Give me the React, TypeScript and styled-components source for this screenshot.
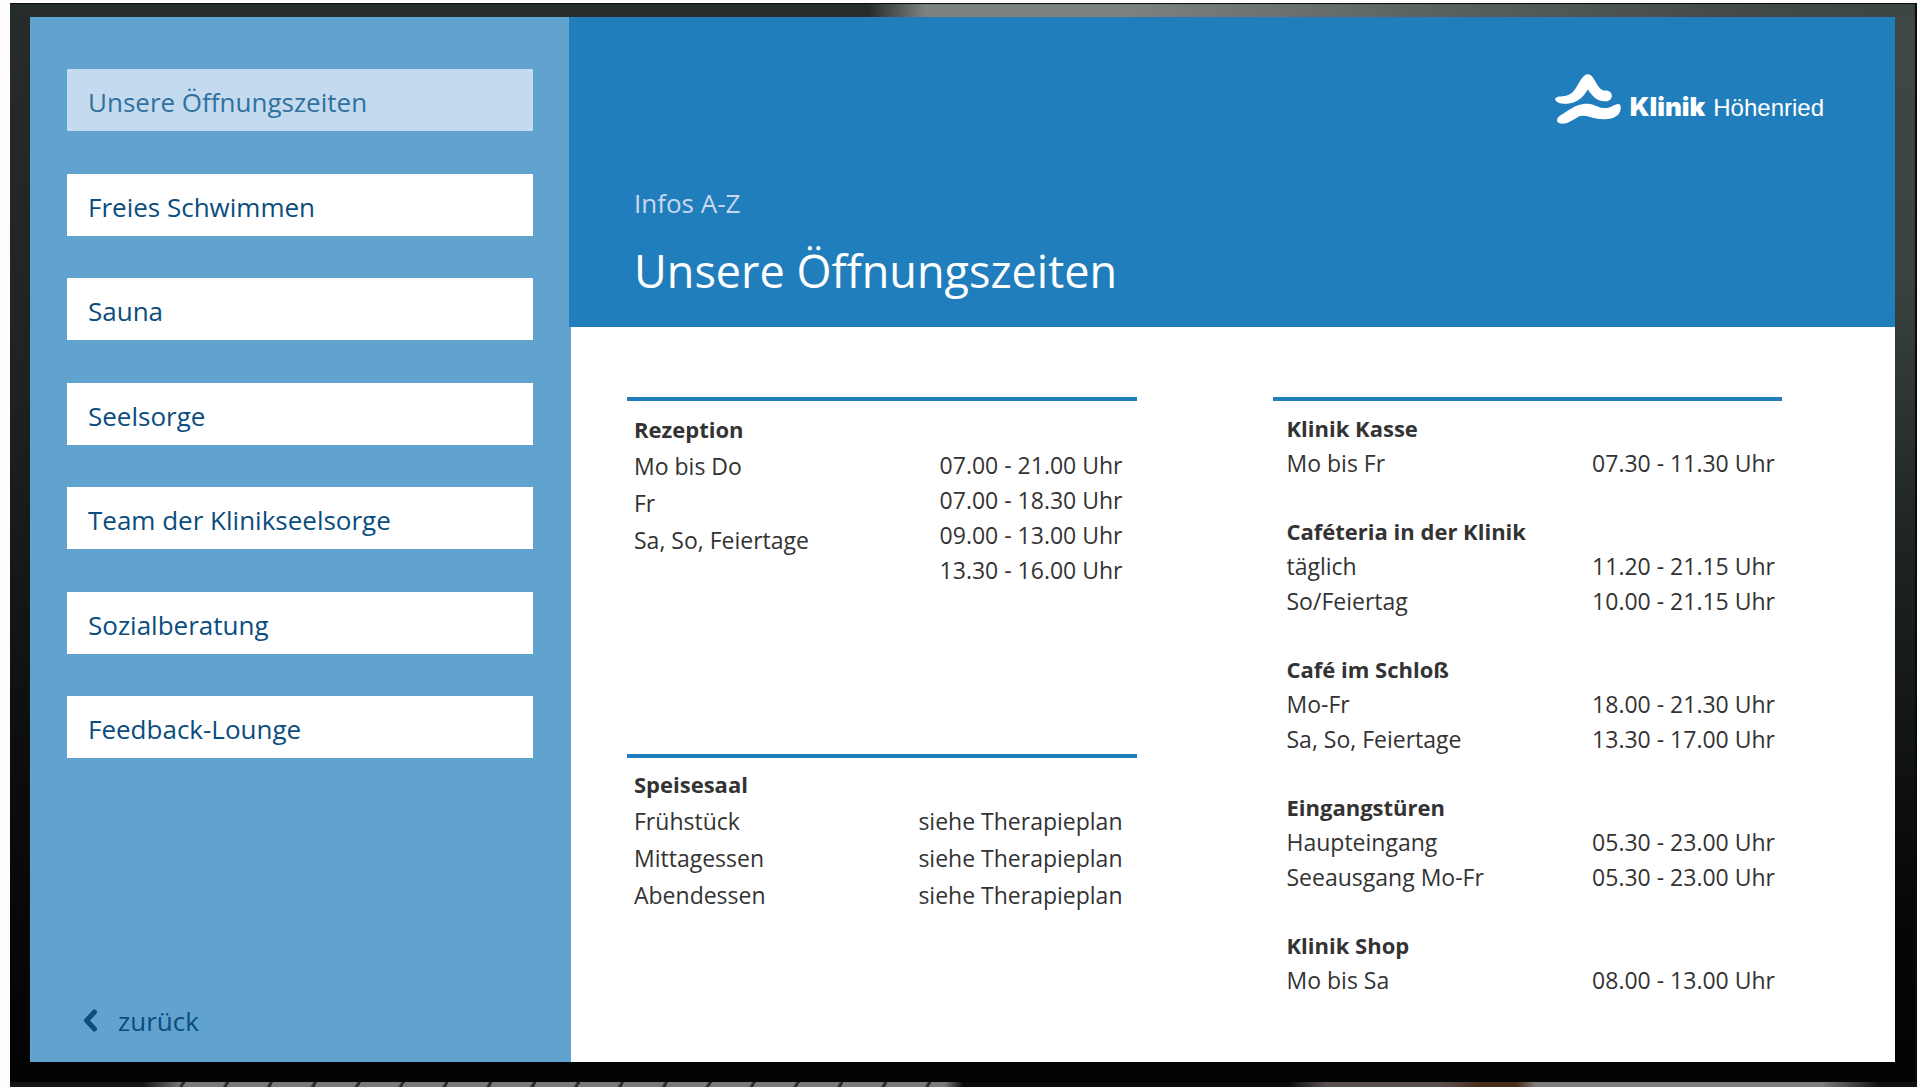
import React from "react";
import styled, { createGlobalStyle, css } from "styled-components";

const color = {
  side: "#61a3cf",
  brand: "#217ebc",
  navy: "#0a4d7e",
  text: "#333333",
};

const GlobalStyle = createGlobalStyle`
  *, *::before, *::after { box-sizing: border-box; }
  body {
    margin: 0;
    background: #fdfdfd;
    color: ${color.text};
    font-family: "Open Sans", "Noto Sans", sans-serif;
  }
  h1, h2, h3, p, ul, table { margin: 0; padding: 0; }
  ul { list-style: none; }
`;

const Page = styled.div`
  min-height: 100vh;
  padding: 3px 3px 1px 10px;
  display: flex;
  flex-direction: column;
`;

const Bezel = styled.div`
  flex: 1;
  display: flex;
  padding: 14px 22px 20px 20px;
  box-shadow: inset -2px 1px 1px #0a0c0c;
  background:
    linear-gradient(90deg, #262c2b 0%, #262c2b 45%, #7d837f 48%, #7d837f 58%, #59615f 75%, #434a48 90%, #3c4543 100%) top / 100% 14px no-repeat,
    linear-gradient(180deg, #3f4846 0%, #3a4341 25%, #1f2423 50%, #050606 85%, #020303 100%) right / 22px 100% no-repeat,
    linear-gradient(180deg, #262c2b 0%, #1e2222 35%, #0c0e0e 70%, #020303 100%);
`;

const Backdrop = styled.div`
  height: 5px;
  background:
    linear-gradient(90deg, #141515 0%, #141515 7%, transparent 9%),
    linear-gradient(90deg, transparent 49%, #0a0a0a 50%, #0a0a0a 67%, #5a5050 69%, #5a5050 75%, #4a2c1c 77%, #4a2c1c 79%, #7f7c7c 80%, #7f7c7c 95%, #121212 98%),
    repeating-linear-gradient(120deg, #7a7a7a 0, #7a7a7a 34px, #2a2a2a 36px, #2a2a2a 38px);
`;

const Screen = styled.div`
  flex: 1;
  display: grid;
  grid-template-columns: minmax(320px, 539fr) 1326fr;
  background: #ffffff;
`;

const Sidebar = styled.nav`
  display: flex;
  flex-direction: column;
  padding: 52px 36px 21px 37px;
  background: ${color.side};
`;

const Menu = styled.ul`
  flex: 1;
  display: flex;
  flex-direction: column;
  justify-content: space-between;
  margin-bottom: 243px;
`;

const MenuButton = styled.button<{ $active?: boolean }>`
  display: block;
  width: 100%;
  height: 62px;
  padding: 4px 21px 0;
  border: 0;
  background: #ffffff;
  color: ${color.navy};
  font: inherit;
  font-size: 26px;
  line-height: 36px;
  text-align: left;
  cursor: pointer;
  ${(p) =>
    p.$active &&
    css`
      background: #c4daee;
      color: #2f719f;
    `}
`;

const BackLink = styled.a`
  display: flex;
  align-items: center;
  gap: 20px;
  padding-left: 16px;
  color: ${color.navy};
  font-size: 26px;
  line-height: 40px;
  text-decoration: none;
`;

const Main = styled.main`
  display: flex;
  flex-direction: column;
`;

const Header = styled.header`
  display: flex;
  justify-content: space-between;
  align-items: flex-start;
  height: 310px;
  padding: 57px 71px 0 65px;
  background: ${color.brand};
  color: #ffffff;
`;

const Heading = styled.div`
  padding-top: 111px;
`;

const Kicker = styled.p`
  color: #c9d8ef;
  font-size: 26px;
  line-height: 36px;
`;

const Title = styled.h1`
  margin-top: 20px;
  font-size: 45px;
  font-weight: 400;
  line-height: 60px;
`;

const Logo = styled.div`
  display: flex;
  align-items: flex-end;
  gap: 9px;
`;

const LogoName = styled.div`
  display: flex;
  align-items: baseline;
  gap: 8px;
  font-family: "Liberation Sans", Arial, sans-serif;
  font-size: 24px;
  line-height: 32px;
`;

const LogoStrong = styled.strong`
  font-family: Inter, "Liberation Sans", sans-serif;
  font-size: 26px;
  font-weight: 900;
  line-height: 1;
`;

const Content = styled.div`
  flex: 1;
  display: grid;
  grid-template-columns: 1fr 1fr;
  gap: 136px;
  padding: 70px 113px 60px 56px;
  border-left: 2px solid ${color.side};
`;

const Column = styled.div`
  display: flex;
  flex-direction: column;
`;

const Section = styled.section<{ $roomy?: boolean; $inset: string }>`
  padding: ${(p) => p.$inset};
  border-top: 4px solid ${color.brand};
  font-size: 23px;
  line-height: ${(p) => (p.$roomy ? 37 : 35)}px;
`;

const Reception = styled(Section)`
  min-height: 357px;
`;

const Caption = styled.h2`
  font-size: 22px;
  font-weight: 700;
  line-height: inherit;
`;

const Split = styled.div`
  display: flex;
  justify-content: space-between;
`;

const Times = styled.ul`
  line-height: 35px;
  text-align: right;
`;

const Group = styled.div`
  & + & { margin-top: 33px; }
`;

const Table = styled.table`
  width: 100%;
  border-collapse: collapse;
  th, td { padding: 0; font-weight: 400; text-align: left; }
  td { text-align: right; }
`;

const menu = [
  "Unsere Öffnungszeiten",
  "Freies Schwimmen",
  "Sauna",
  "Seelsorge",
  "Team der Klinikseelsorge",
  "Sozialberatung",
  "Feedback-Lounge",
];

type Row = [string, string];

const meals: Row[] = [
  ["Frühstück", "siehe Therapieplan"],
  ["Mittagessen", "siehe Therapieplan"],
  ["Abendessen", "siehe Therapieplan"],
];

const places: { name: string; rows: Row[] }[] = [
  { name: "Klinik Kasse", rows: [["Mo bis Fr", "07.30 - 11.30 Uhr"]] },
  {
    name: "Caféteria in der Klinik",
    rows: [["täglich", "11.20 - 21.15 Uhr"], ["So/Feiertag", "10.00 - 21.15 Uhr"]],
  },
  {
    name: "Café im Schloß",
    rows: [["Mo-Fr", "18.00 - 21.30 Uhr"], ["Sa, So, Feiertage", "13.30 - 17.00 Uhr"]],
  },
  {
    name: "Eingangstüren",
    rows: [["Haupteingang", "05.30 - 23.00 Uhr"], ["Seeausgang Mo-Fr", "05.30 - 23.00 Uhr"]],
  },
  { name: "Klinik Shop", rows: [["Mo bis Sa", "08.00 - 13.00 Uhr"]] },
];

function Hours({ name, rows }: { name: string; rows: Row[] }) {
  return (
    <Group>
      <Caption>{name}</Caption>
      <Table aria-label={name}>
        <tbody>
          {rows.map(([label, value]) => (
            <tr key={label}>
              <th scope="row">{label}</th>
              <td>{value}</td>
            </tr>
          ))}
        </tbody>
      </Table>
    </Group>
  );
}

export default function App() {
  return (
    <>
      <GlobalStyle />
      <Page>
        <Bezel>
          <Screen>
            <Sidebar aria-label="Infos A-Z">
              <Menu>
                {menu.map((label, i) => (
                  <li key={label}>
                    <MenuButton type="button" $active={i === 0}>{label}</MenuButton>
                  </li>
                ))}
              </Menu>
              <BackLink href="#">
                <svg width="15" height="28" viewBox="0 0 15 28" fill="none" stroke="currentColor" strokeWidth="5" strokeLinecap="round" strokeLinejoin="round" aria-hidden="true">
                  <path d="M11.5 5 L3.5 13.5 L11.5 22" />
                </svg>
                zurück
              </BackLink>
            </Sidebar>
            <Main>
              <Header>
                <Heading>
                  <Kicker>Infos A-Z</Kicker>
                  <Title>Unsere Öffnungszeiten</Title>
                </Heading>
                <Logo>
                  <svg width="66" height="50" viewBox="0 0 195 148" fill="currentColor" aria-hidden="true">
                    <path d="M0 75 C2 66 12 67 28 65 C48 62 55 52 64 38 C76 18 84 1 97 1 C110 1 116 18 126 33 C134 45 140 49 150 49 C162 49 168 56 168 64 C168 75 160 82 148 81 C124 80 113 69 97 46 C84 66 76 75 58 83 C40 91 4 91 0 75 Z" />
                    <path d="M6 138 C5 126 18 121 35 110 C58 95 75 88 96 88 C118 88 126 101 148 101 C168 101 176 88 188 89 C199 92 195 114 184 123 C170 135 142 136 122 132 C102 128 92 121 76 124 C60 127 46 147 20 147 C11 147 6 144 6 138 Z" />
                  </svg>
                  <LogoName>
                    <LogoStrong>Klinik</LogoStrong>
                    <span>Höhenried</span>
                  </LogoName>
                </Logo>
              </Header>
              <Content>
                <Column>
                  <Reception $roomy $inset="10px 14px 0 7px">
                    <Caption>Rezeption</Caption>
                    <Split>
                      <ul>
                        <li>Mo bis Do</li>
                        <li>Fr</li>
                        <li>Sa, So, Feiertage</li>
                      </ul>
                      <Times>
                        <li>07.00 - 21.00 Uhr</li>
                        <li>07.00 - 18.30 Uhr</li>
                        <li>09.00 - 13.00 Uhr</li>
                        <li>13.30 - 16.00 Uhr</li>
                      </Times>
                    </Split>
                  </Reception>
                  <Section $roomy $inset="8px 14px 0 7px">
                    <Hours name="Speisesaal" rows={meals} />
                  </Section>
                </Column>
                <Column>
                  <Section $inset="10px 7px 0 14px">
                    {places.map((place) => (
                      <Hours key={place.name} {...place} />
                    ))}
                  </Section>
                </Column>
              </Content>
            </Main>
          </Screen>
        </Bezel>
        <Backdrop />
      </Page>
    </>
  );
}
